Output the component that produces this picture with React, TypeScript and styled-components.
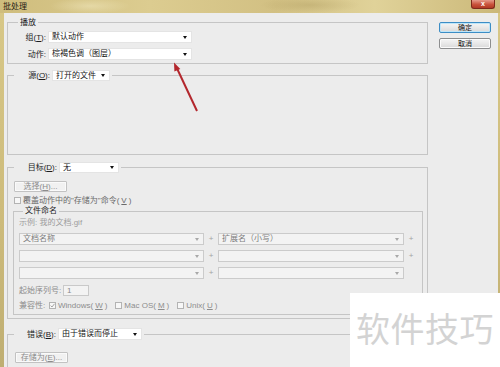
import React from 'react';
import styled, { createGlobalStyle } from 'styled-components';

const GlobalStyle = createGlobalStyle`
  html, body {
    margin: 0;
    padding: 0;
    background: #ffffff;
  }
  body {
    font-family: "Liberation Sans", "Noto Sans CJK SC", sans-serif;
  }
  * {
    box-sizing: border-box;
  }
`;

// Window frame
const Window = styled.div`
  position: relative;
  width: 500px;
  height: 367px;
  display: flex;
  flex-direction: column;
  overflow: hidden;
  background: linear-gradient(to bottom, #d8c888 0%, #cdbb7b 60%, #bfae72 100%);
`;

const TitleBar = styled.div`
  flex: none;
  height: 13px;
  display: flex;
  justify-content: space-between;
  align-items: flex-start;
  padding: 0 5px 0 3px;
  background:
    radial-gradient(ellipse 40px 8px at 90px 6px, rgba(255, 250, 220, 0.35), transparent),
    radial-gradient(ellipse 50px 8px at 310px 5px, rgba(150, 130, 70, 0.25), transparent),
    linear-gradient(to right, #cfbd7d, #dccc90 30%, #d2c083 55%, #e0d299 75%, #cbb879);
`;

const Title = styled.span`
  font-size: 8px;
  line-height: 13px;
  color: #262014;
`;

const CloseButton = styled.div`
  width: 24px;
  height: 9px;
  border: 1px solid #7e2a1c;
  border-top: none;
  border-radius: 0 0 3px 3px;
  background: linear-gradient(to bottom, #e59a8a, #c9523c 55%, #b13a25);
  color: #ffffff;
  font-size: 7px;
  line-height: 8px;
  font-weight: bold;
  text-align: center;
`;

const Body = styled.div`
  flex: 1;
  display: flex;
  margin: 0 2px 4px 4px;
  padding-left: 3px;
  background: #ececec;
`;

const MainColumn = styled.div`
  width: 421px;
  display: flex;
  flex-direction: column;
  padding-top: 4px;
`;

const SideColumn = styled.div`
  display: flex;
  flex-direction: column;
  gap: 5px;
  padding: 9px 0 0 11px;
`;

const DialogButton = styled.button<{ $default?: boolean }>`
  width: 52px;
  height: 11px;
  padding: 0;
  border: 1px solid ${p => (p.$default ? '#3c8dc5' : '#8d8e8f')};
  border-radius: 2px;
  background: linear-gradient(to bottom, #f5f5f5, #e8e8e8 50%, #d9d9d9);
  box-shadow: inset 0 0 0 1px ${p => (p.$default ? '#bfe6f9' : '#fbfbfb')};
  font-family: inherit;
  font-size: 7px;
  line-height: 9px;
  color: #111111;
`;

// Group boxes
const Group = styled.fieldset<{ $mt?: number }>`
  margin: ${p => p.$mt ?? 0}px 0 0 0;
  padding: 0;
  min-width: 0;
  border: 1px solid #c5c5c5;
`;

const Legend = styled.legend<{ $ml: number; $h?: number }>`
  display: flex;
  align-items: center;
  gap: 2px;
  height: ${p => p.$h ?? 11}px;
  margin-left: ${p => p.$ml}px;
  padding: 0 2px;
  font-size: 8px;
  line-height: ${p => p.$h ?? 11}px;
  color: #1c1c1c;
`;

const FieldLabel = styled.span<{ $w: number }>`
  flex: none;
  width: ${p => p.$w}px;
  text-align: right;
  font-size: 8px;
  line-height: 11px;
  white-space: nowrap;
  color: #1c1c1c;
`;

const Select = styled.div<{ $w?: number; $h?: number; $disabled?: boolean }>`
  flex: none;
  width: ${p => (p.$w ? `${p.$w}px` : '100%')};
  height: ${p => p.$h ?? 12}px;
  display: flex;
  align-items: center;
  padding: 0 4px 0 3px;
  background: ${p => (p.$disabled ? '#f3f3f3' : '#ffffff')};
  border: 1px solid ${p => (p.$disabled ? '#cbcbcb' : '#e4e4e4')};
  font-size: 8px;
  line-height: 10px;
  white-space: nowrap;
  color: ${p => (p.$disabled ? '#7c7c7c' : '#151515')};
`;

const Caret = styled.span<{ $disabled?: boolean }>`
  flex: none;
  width: 0;
  height: 0;
  margin-left: auto;
  border-left: 2.5px solid transparent;
  border-right: 2.5px solid transparent;
  border-top: 3px solid ${p => (p.$disabled ? '#a8a8a8' : '#111111')};
`;

// 播放
const PlayBody = styled.div`
  display: flex;
  flex-direction: column;
  gap: 5px;
  padding: 3px 0;
`;

const PlayRow = styled.div`
  display: flex;
  align-items: center;
  gap: 2px;
  height: 12px;
`;

// 源
const SourceBody = styled.div`
  height: 73px;
`;

// 目标
const TargetBody = styled.div`
  display: flex;
  flex-direction: column;
  align-items: flex-start;
  padding: 8px 4px 3px 5px;
`;

const PlainButton = styled.button`
  width: 53px;
  height: 11px;
  margin-left: 1px;
  padding: 0;
  border: 1px solid #c2c2c2;
  border-radius: 1px;
  background: #f1f1f1;
  box-shadow: inset 0 0 0 1px #fafafa;
  font-family: inherit;
  font-size: 8px;
  line-height: 9px;
  color: #8b8b8b;
  text-align: center;
`;

const CheckRow = styled.div`
  display: flex;
  align-items: center;
  gap: 2px;
  height: 9px;
  margin: 4px 0 0 1px;
  font-size: 8px;
  line-height: 9px;
  color: #6a6a6a;
  white-space: nowrap;
`;

const Box = styled.span<{ $disabled?: boolean }>`
  flex: none;
  width: 7px;
  height: 7px;
  display: flex;
  align-items: center;
  justify-content: center;
  border: 1px solid ${p => (p.$disabled ? '#b3b3b3' : '#8a8a8a')};
  background: #f7f7f7;
`;

const NamingGroup = styled(Group)`
  align-self: stretch;
`;

const NamingBody = styled.div`
  display: flex;
  flex-direction: column;
  padding: 0 0 3px 5px;
`;

const Example = styled.div`
  margin-top: 2px;
  height: 10px;
  font-size: 8px;
  line-height: 10px;
  color: #9c9c9c;
`;

const NameGrid = styled.div`
  display: grid;
  grid-template-columns: 185px 14px 186px 14px;
  grid-auto-rows: 12px;
  row-gap: 5px;
  align-items: center;
  margin-top: 5px;
`;

const Plus = styled.span`
  text-align: center;
  font-size: 8px;
  line-height: 10px;
  color: #a3a3a3;
`;

const StartRow = styled.div`
  display: flex;
  align-items: center;
  gap: 2px;
  height: 11px;
  margin-top: 6px;
  font-size: 8px;
  color: #8c8c8c;
`;

const GrayLabel = styled.span<{ $w: number }>`
  flex: none;
  width: ${p => p.$w}px;
  white-space: nowrap;
  line-height: 11px;
`;

const NumberInput = styled.div`
  width: 26px;
  height: 11px;
  padding-left: 3px;
  border: 1px solid #c9c9c9;
  background: #f3f3f3;
  font-size: 8px;
  line-height: 9px;
  color: #8a8a8a;
`;

const CompatRow = styled.div`
  display: flex;
  align-items: center;
  height: 11px;
  margin-top: 4px;
  font-size: 8px;
  line-height: 11px;
  color: #8c8c8c;
  white-space: nowrap;
`;

const CheckItem = styled.span`
  display: flex;
  align-items: center;
  gap: 2px;
  margin-right: 8px;
`;

// 错误
const ErrorBody = styled.div`
  padding: 6px 0 3px 6px;
`;

// Overlays
const Arrow = styled.svg`
  position: absolute;
  left: 0;
  top: 0;
  pointer-events: none;
`;

const Watermark = styled.div`
  position: absolute;
  right: 0;
  bottom: 0;
  width: 150px;
  height: 74px;
  display: flex;
  align-items: center;
  justify-content: center;
  padding-bottom: 4px;
  background: #ffffff;
  font-family: "Noto Sans CJK SC", sans-serif;
  font-size: 34px;
  line-height: 40px;
  color: #d3d3d3;
  letter-spacing: 0.5px;
`;

const Check = () => (
  <svg width="5" height="5" viewBox="0 0 5 5">
    <path d="M0.6 2.6 L2 4 L4.5 0.8" fill="none" stroke="#9a9a9a" strokeWidth="0.9" />
  </svg>
);

export default function App() {
  const nameRows = [
    { left: '文档名称', right: '扩展名（小写）', plus: true },
    { left: '', right: '', plus: true },
    { left: '', right: '', plus: false }
  ];

  return (
    <>
      <GlobalStyle />
      <Window>
        <TitleBar>
          <Title>批处理</Title>
          <CloseButton>x</CloseButton>
        </TitleBar>

        <Body>
          <MainColumn>
            {/* 播放 */}
            <Group>
              <Legend $ml={10}>播放</Legend>
              <PlayBody>
                <PlayRow>
                  <FieldLabel $w={38}>组(<u>T</u>):</FieldLabel>
                  <Select $w={144}>
                    默认动作
                    <Caret />
                  </Select>
                </PlayRow>
                <PlayRow>
                  <FieldLabel $w={38}>动作:</FieldLabel>
                  <Select $w={144}>
                    棕褐色调（图层）
                    <Caret />
                  </Select>
                </PlayRow>
              </PlayBody>
            </Group>

            {/* 源 */}
            <Group $mt={6}>
              <Legend $ml={6}>
                <FieldLabel $w={34}>源(<u>O</u>):</FieldLabel>
                <Select $w={58} $h={11}>
                  打开的文件
                  <Caret />
                </Select>
              </Legend>
              <SourceBody />
            </Group>

            {/* 目标 */}
            <Group $mt={7}>
              <Legend $ml={6}>
                <FieldLabel $w={41}>目标(<u>D</u>):</FieldLabel>
                <Select $w={60} $h={11}>
                  无
                  <Caret />
                </Select>
              </Legend>
              <TargetBody>
                <PlainButton>选择(<u>H</u>)...</PlainButton>
                <CheckRow>
                  <Box $disabled />
                  覆盖动作中的"存储为"命令(<u>V</u>)
                </CheckRow>
                <NamingGroup $mt={1}>
                  <Legend $ml={9} $h={10}>文件命名</Legend>
                  <NamingBody>
                    <Example>示例: 我的文档.gif</Example>
                    <NameGrid>
                      {nameRows.map((row, i) => (
                        <React.Fragment key={i}>
                          <Select $disabled>
                            {row.left}
                            <Caret $disabled />
                          </Select>
                          <Plus>+</Plus>
                          <Select $disabled>
                            {row.right}
                            <Caret $disabled />
                          </Select>
                          <Plus>{row.plus ? '+' : ''}</Plus>
                        </React.Fragment>
                      ))}
                    </NameGrid>
                    <StartRow>
                      <GrayLabel $w={42}>起始序列号:</GrayLabel>
                      <NumberInput>1</NumberInput>
                    </StartRow>
                    <CompatRow>
                      <GrayLabel $w={30}>兼容性:</GrayLabel>
                      <CheckItem>
                        <Box $disabled>
                          <Check />
                        </Box>
                        Windows(<u>W</u>)
                      </CheckItem>
                      <CheckItem>
                        <Box $disabled />
                        Mac OS(<u>M</u>)
                      </CheckItem>
                      <CheckItem>
                        <Box $disabled />
                        Unix(<u>U</u>)
                      </CheckItem>
                    </CompatRow>
                  </NamingBody>
                </NamingGroup>
              </TargetBody>
            </Group>

            {/* 错误 */}
            <Group $mt={9}>
              <Legend $ml={6} $h={12}>
                <FieldLabel $w={40}>错误(<u>B</u>):</FieldLabel>
                <Select $w={84}>
                  由于错误而停止
                  <Caret />
                </Select>
              </Legend>
              <ErrorBody>
                <PlainButton>存储为(<u>E</u>)...</PlainButton>
              </ErrorBody>
            </Group>
          </MainColumn>

          <SideColumn>
            <DialogButton $default>确定</DialogButton>
            <DialogButton>取消</DialogButton>
          </SideColumn>
        </Body>

        <Arrow width="500" height="367" viewBox="0 0 500 367">
          <line x1="197" y1="111" x2="177.5" y2="69.5" stroke="#b3272d" strokeWidth="2" />
          <polygon points="174,62.5 180.3,69 174.4,71.6" fill="#b3272d" />
        </Arrow>

        <Watermark>软件技巧</Watermark>
      </Window>
    </>
  );
}
